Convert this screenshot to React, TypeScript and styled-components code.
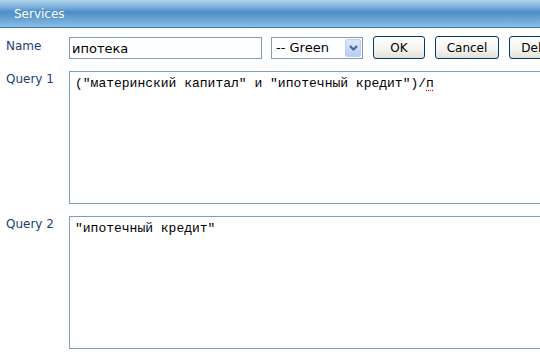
import React from "react";
import styled, { createGlobalStyle } from "styled-components";

const GlobalStyle = createGlobalStyle`
  html, body {
    margin: 0;
    padding: 0;
    background: #fff;
    overflow: hidden;
  }
  body {
    font-family: "DejaVu Sans", Verdana, sans-serif;
  }
`;

const Page = styled.div`
  width: 640px;
`;

// 상단 제목 바
const TitleBar = styled.div`
  height: 27px;
  display: flex;
  align-items: center;
  padding-left: 14px;
  color: #fff;
  font-size: 12px;
  background: linear-gradient(
    to bottom,
    #b0d3ec 0%,
    #7fb2dc 25%,
    #4a8ec6 45%,
    #5d9ace 60%,
    #8cbde3 100%
  );
  border-bottom: 1px solid #3c7db6;
`;

const Form = styled.div`
  display: grid;
  grid-template-columns: 69px auto;
  row-gap: 12px;
  padding-top: 8px;
`;

const Label = styled.div`
  padding-left: 6px;
  padding-top: ${(p: { $top?: number }) => p.$top ?? 1}px;
  font-size: 12px;
  color: #1b4174;
`;

const Row = styled.div`
  display: flex;
  align-items: center;
`;

const TextInput = styled.input`
  width: 193px;
  height: 22px;
  box-sizing: border-box;
  border: 1px solid #7f9db9;
  padding: 2px 2px 0;
  font-family: "DejaVu Sans", Verdana, sans-serif;
  font-size: 13px;
  color: #000;
  outline: none;
`;

const SelectBox = styled.div`
  margin-left: 9px;
  width: 92px;
  height: 22px;
  box-sizing: border-box;
  border: 1px solid #7f9db9;
  display: flex;
  align-items: center;
  justify-content: space-between;
  padding: 0 1px 0 4px;
  font-size: 13px;
  color: #000;
`;

const ArrowButton = styled.span`
  width: 16px;
  height: 18px;
  box-sizing: border-box;
  border: 1px solid #b9cdf5;
  border-radius: 2px;
  background: linear-gradient(to bottom, #dbe6fc, #b7cdf7);
  display: flex;
  align-items: center;
  justify-content: center;
`;

const Button = styled.button<{ $w?: number }>`
  margin-left: 10px;
  height: 23px;
  box-sizing: border-box;
  border: 1px solid #003c74;
  border-radius: 3px;
  background: linear-gradient(to bottom, #ffffff 0%, #f4f3ee 60%, #e3e1d6 100%);
  font-family: "DejaVu Sans", Verdana, sans-serif;
  font-size: 12px;
  color: #000;
  padding: 0;
  width: ${(p) => p.$w ?? 52}px;
  cursor: pointer;
`;

const QueryBox = styled.div`
  width: 520px;
  height: 133px;
  box-sizing: border-box;
  border: 1px solid #7f9db9;
  padding: 4px 5px;
  font-family: "Liberation Mono", "Courier New", monospace;
  font-size: 13px;
  color: #000;
  white-space: pre;
`;

const Misspelled = styled.span`
  text-decoration: underline dotted #e00;
  text-underline-offset: 3px;
`;

export default function App() {
  return (
    <Page>
      <GlobalStyle />
      <TitleBar>Services</TitleBar>
      <Form>
        <Label $top={3}>Name</Label>
        <Row>
          <TextInput defaultValue="ипотека" />
          <SelectBox>
            <span>-- Green</span>
            <ArrowButton>
              <svg width="9" height="6" viewBox="0 0 9 6">
                <path d="M1 1 L4.5 4.5 L8 1" fill="none" stroke="#4d6185" strokeWidth="2" />
              </svg>
            </ArrowButton>
          </SelectBox>
          <Button $w={52}>OK</Button>
          <Button $w={64}>Cancel</Button>
          <Button $w={64}>Delete</Button>
        </Row>

        <Label>Query 1</Label>
        <QueryBox>
          ("материнский капитал" и "ипотечный кредит")/<Misspelled>п</Misspelled>
        </QueryBox>

        <Label>Query 2</Label>
        <QueryBox>"ипотечный кредит"</QueryBox>
      </Form>
    </Page>
  );
}
